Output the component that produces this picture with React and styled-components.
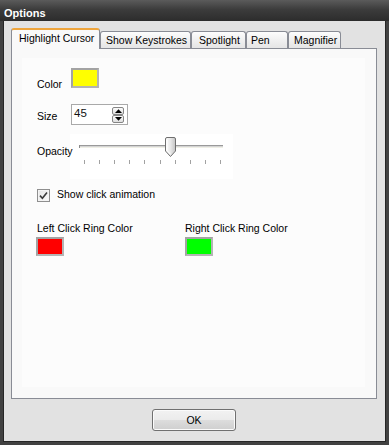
import React from 'react';
import styled, { createGlobalStyle } from 'styled-components';

const GlobalStyle = createGlobalStyle`
  html, body { margin: 0; padding: 0; background: #ffffff; }
  body { font-family: "Liberation Sans", Arial, sans-serif; }
  *, *::before, *::after { box-sizing: border-box; }
`;

const Window = styled.div`
  width: 389px;
  height: 445px;
  background: #414141;
  padding: 0 3px 3px 3px;
  display: flex;
  flex-direction: column;
`;

const TitleBar = styled.div`
  height: 21px;
  flex: none;
  margin: 0 -3px;
  padding: 7px 0 0 4px;
  background: linear-gradient(to bottom, #5b5b5b 0%, #3c3c3c 45%, #2c2c2c 100%);
  color: #ffffff;
  font-weight: bold;
  font-size: 11px;
  line-height: 12px;
`;

const Client = styled.div`
  flex: 1;
  background: #e2e2e2;
  border: 1px solid #262626;
  border-top: none;
  padding: 7px 8px 10px 7px;
  display: flex;
  flex-direction: column;
  font-size: 10.5px;
  line-height: 12px;
  color: #000;
`;

const TabRow = styled.div`
  height: 20px;
  display: flex;
  align-items: flex-end;
  position: relative;
  z-index: 1;
`;

const Tab = styled.div`
  flex: none;
  width: ${p => p.$w}px;
  height: ${p => (p.$active ? 21 : 17)}px;
  margin-bottom: ${p => (p.$active ? -1 : 0)}px;
  padding: 2px 0 0 ${p => p.$pl}px;
  border: 1px solid #898c95;
  border-bottom: none;
  border-top: ${p => (p.$active ? '2px solid #efa53c' : '1px solid #898c95')};
  border-radius: 3px 3px 0 0;
  background: ${p =>
    p.$active
      ? '#f9f9f9'
      : 'linear-gradient(to bottom, #fdfdfd 0%, #f1f1f1 45%, #e5e5e5 100%)'};
  white-space: nowrap;
  color: #000;
`;

const Panel = styled.div`
  height: 351px;
  flex: none;
  border: 1px solid #898c95;
  background: #f9f9f9;
  padding: 9px 11px 11px 10px;
`;

const Page = styled.div`
  height: 100%;
  background: #fcfcfc;
  padding: 10px 0 0 15px;
  display: flex;
  flex-direction: column;
`;

const FieldRow = styled.div`
  display: flex;
  align-items: flex-start;
  margin-top: ${p => p.$mt || 0}px;
`;

const FieldLabel = styled.div`
  width: ${p => p.$w}px;
  flex: none;
  padding-top: ${p => p.$pt}px;
  white-space: nowrap;
  position: relative;
  z-index: 1;
`;

const Swatch = styled.div`
  width: 28px;
  height: ${p => p.$h}px;
  margin-left: ${p => p.$ml || 0}px;
  background: ${p => p.$color};
  border: 2px solid #a3a3a3;
  border-right-color: #b4b4b4;
  border-bottom-color: #b4b4b4;
`;

const SpinBox = styled.div`
  width: 57px;
  height: 21px;
  border: 1px solid #a9a9a9;
  background: #ffffff;
  display: flex;
  align-items: flex-start;
  padding: 1px 3px 0 2px;
`;

const SpinValue = styled.div`
  flex: 1;
  font-size: 11.5px;
  line-height: 13px;
  padding-top: 1px;
  color: #111;
`;

const SpinButtons = styled.div`
  display: flex;
  flex-direction: column;
  width: 12px;
  margin-top: 1px;
`;

const SpinButton = styled.div`
  height: 8px;
  border: 1px solid #858585;
  border-radius: 2px;
  background: linear-gradient(to bottom, #fbfbfb, #dedede);
  display: flex;
  align-items: center;
  justify-content: center;
`;

const SliderBox = styled.div`
  width: 163px;
  height: 45px;
  background: #ffffff;
  flex: none;
`;

const CheckRow = styled.label`
  display: flex;
  align-items: flex-start;
  margin-top: 9px;
`;

const CheckBox = styled.span`
  width: 13px;
  height: 13px;
  margin: 1px 7px 0 0;
  border: 1px solid #8f8f8f;
  background: linear-gradient(135deg, #e4e4e4 0%, #fbfbfb 100%);
  box-shadow: inset 0 0 0 1px #f4f4f4;
  display: flex;
  align-items: center;
  justify-content: center;
`;

const RingRow = styled.div`
  display: flex;
  margin-top: 20px;
`;

const RingColumn = styled.div`
  width: 148px;
  display: flex;
  flex-direction: column;
  gap: 3px;
  white-space: nowrap;
`;

const ButtonRow = styled.div`
  margin-top: 10px;
  display: flex;
  justify-content: center;
`;

const Button = styled.button`
  width: 84px;
  height: 22px;
  border: 1px solid #707070;
  border-radius: 3px;
  background: linear-gradient(to bottom, #f2f2f2 0%, #ebebeb 50%, #dddddd 50%, #cfcfcf 100%);
  box-shadow: inset 0 0 0 1px #fbfbfb;
  font-family: "Liberation Sans", Arial, sans-serif;
  font-size: 10.5px;
  line-height: 12px;
  color: #000;
  padding: 0;
`;

const tabs = [
  { label: 'Highlight Cursor', w: 89, pl: 7, active: true },
  { label: 'Show Keystrokes', w: 91, pl: 5 },
  { label: 'Spotlight', w: 55, pl: 7 },
  { label: 'Pen', w: 42, pl: 4 },
  { label: 'Magnifier', w: 53, pl: 5 },
];

function Arrow({ up }) {
  return (
    <svg width="7" height="4" viewBox="0 0 7 4">
      <path d={up ? 'M0 4 L3.5 0.3 L7 4 Z' : 'M0 0 L3.5 3.7 L7 0 Z'} fill="#000" />
    </svg>
  );
}

function Slider({ thumbX }) {
  const ticks = Array.from({ length: 10 }, (_, i) => Math.round(14 + i * 15.1));
  return (
    <SliderBox>
      <svg width="163" height="45" viewBox="0 0 163 45">
        <defs>
          <linearGradient id="thumbg" x1="0" y1="0" x2="1" y2="0">
            <stop offset="0" stopColor="#fdfdfd" />
            <stop offset="0.5" stopColor="#e8e8e8" />
            <stop offset="1" stopColor="#c4c4c4" />
          </linearGradient>
        </defs>
        <rect x="9" y="11" width="144" height="1" fill="#9a9a9a" />
        <rect x="9" y="12" width="144" height="1" fill="#d4d4d4" />
        <rect x="9" y="13" width="144" height="1" fill="#efefe6" />
        <rect x="9" y="11" width="1" height="3" fill="#8a8a8a" />
        {ticks.map(x => (
          <rect key={x} x={x} y="26" width="1" height="4" fill="#a2a2a2" />
        ))}
        <path
          d={`M${thumbX + 0.5} 5 Q${thumbX + 0.5} 3.5 ${thumbX + 2} 3.5 H${thumbX + 9} Q${thumbX + 10.5} 3.5 ${thumbX + 10.5} 5 V17 L${thumbX + 5.5} 22.5 L${thumbX + 0.5} 17 Z`}
          fill="url(#thumbg)"
          stroke="#6f6f6f"
          strokeWidth="1"
        />
        <path
          d={`M${thumbX + 2} 6 V16.5 L${thumbX + 5.5} 20.3`}
          fill="none"
          stroke="#ffffff"
          strokeWidth="1"
        />
      </svg>
    </SliderBox>
  );
}

export default function App() {
  return (
    <>
      <GlobalStyle />
      <Window>
        <TitleBar>Options</TitleBar>
        <Client>
          <TabRow>
            {tabs.map(t => (
              <Tab key={t.label} $w={t.w} $pl={t.pl} $active={t.active}>
                {t.label}
              </Tab>
            ))}
          </TabRow>
          <Panel>
            <Page>
              <FieldRow>
                <FieldLabel $w={34} $pt={10}>Color</FieldLabel>
                <Swatch $color="#ffff00" $h={20} />
              </FieldRow>
              <FieldRow $mt={14}>
                <FieldLabel $w={34} $pt={6}>Size</FieldLabel>
                <SpinBox>
                  <SpinValue>45</SpinValue>
                  <SpinButtons>
                    <SpinButton><Arrow up /></SpinButton>
                    <SpinButton><Arrow /></SpinButton>
                  </SpinButtons>
                </SpinBox>
              </FieldRow>
              <FieldRow $mt={9}>
                <FieldLabel $w={33} $pt={11}>Opacity</FieldLabel>
                <Slider thumbX={95} />
              </FieldRow>
              <CheckRow>
                <CheckBox>
                  <svg width="9" height="9" viewBox="0 0 9 9">
                    <path d="M1 4.6 L3.4 7.2 L8 1.6" fill="none" stroke="#3b3b3b" strokeWidth="1.6" />
                  </svg>
                </CheckBox>
                Show click animation
              </CheckRow>
              <RingRow>
                <RingColumn>
                  Left Click Ring Color
                  <Swatch $color="#ff0000" $h={19} $ml={-1} />
                </RingColumn>
                <RingColumn>
                  Right Click Ring Color
                  <Swatch $color="#00ff00" $h={19} />
                </RingColumn>
              </RingRow>
            </Page>
          </Panel>
          <ButtonRow>
            <Button>OK</Button>
          </ButtonRow>
        </Client>
      </Window>
    </>
  );
}
